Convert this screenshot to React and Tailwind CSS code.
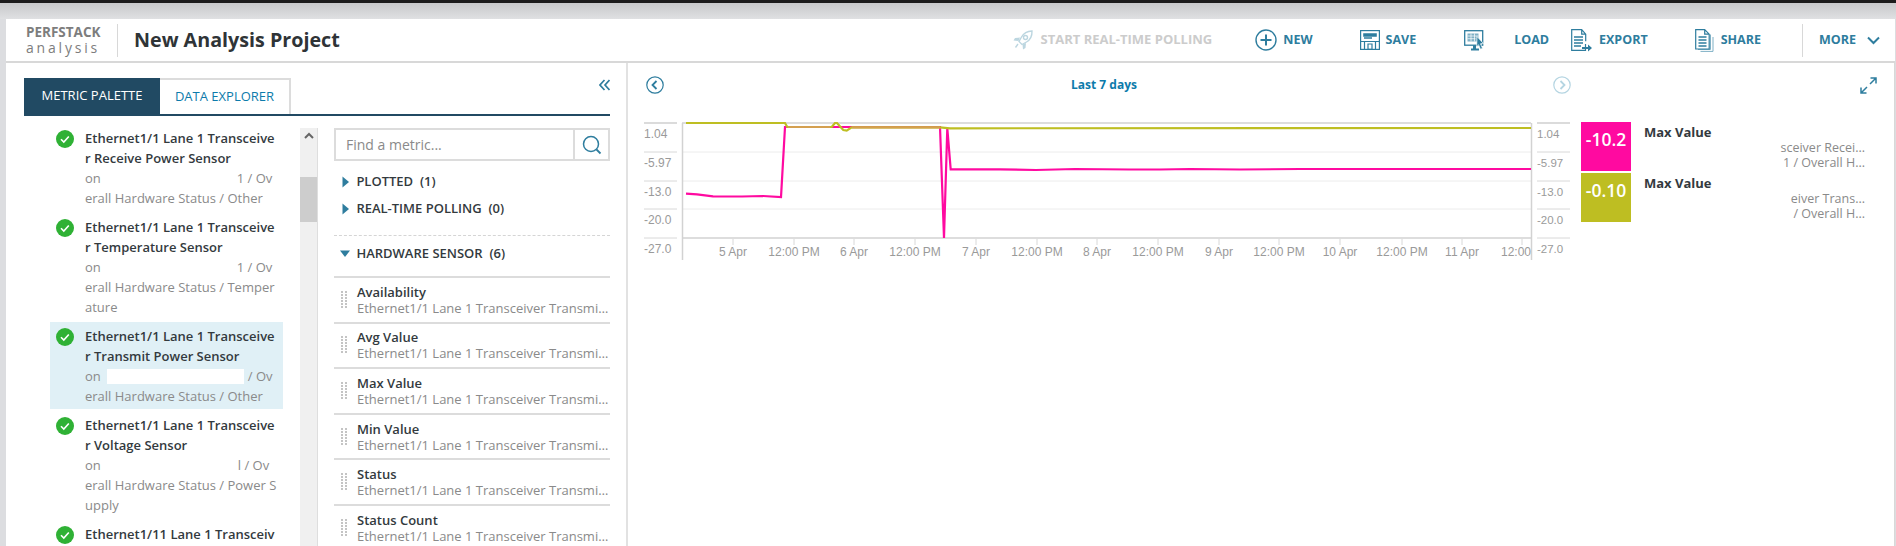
const BLUE = "#2e7d9e";

const Rocket = () => (
  <svg width="22" height="22" viewBox="0 0 22 22" fill="none" stroke="#bcd6e0" strokeWidth="1.4">
    <path d="M20 2c-5 .2-8.5 2.5-10.5 6L7 12.5l3 3 4.5-2.5c3.5-2 5.7-5.5 5.5-11z" />
    <circle cx="13.5" cy="8.5" r="2" />
    <path d="M8 8.5 3 9 1.5 11.5 6.5 12M14 14l-.5 5-2.5 1.5-.5-5" fill="#bcd6e0" stroke="none" />
    <path d="M6 15l-2.5 3.5" />
  </svg>
);
const Plus = () => (
  <svg width="22" height="22" viewBox="0 0 22 22" fill="none" stroke={BLUE}>
    <circle cx="11" cy="11" r="10" strokeWidth="1.4" />
    <path d="M11 5.5v11M5.5 11h11" strokeWidth="2" />
  </svg>
);
const SaveIcon = () => (
  <svg width="20" height="20" viewBox="0 0 20 20" fill="none" stroke={BLUE} strokeWidth="1.2">
    <rect x=".6" y=".6" width="18.8" height="18.8" />
    <path d="M.6 11.5h18.8M4.5 19.4v-7.9M15.5 19.4v-7.9M8 14h4v5.4H8z" />
    <path d="M4 4h12v2H4zM4 8h8" strokeWidth="1.6" fill={BLUE} />
  </svg>
);
const LoadIcon = () => (
  <svg width="21" height="21" viewBox="0 0 21 21" fill="none" stroke={BLUE}>
    <rect x=".7" y=".7" width="18" height="14.5" strokeWidth="1.3" />
    <rect x="3.5" y="3.5" width="11" height="8" fill="#7fb0c5" stroke="none" />
    <path d="M3.5 6h11M3.5 8.7h8M7 3.5v8M10.5 3.5v8" stroke="#fff" strokeWidth=".7" />
    <path d="M7 19.5h8" strokeWidth="2" />
    <path d="M9 15.2h3V19H9z" fill={BLUE} stroke="none" />
    <path d="M13 6.5l6.5 7-3 .3 2 4.500-2 1-2-4.600-1.800 2.300z" fill={BLUE} stroke="#fff" strokeWidth=".7" />
  </svg>
);
const ExportIcon = () => (
  <svg width="21" height="23" viewBox="0 0 21 23" fill="none" stroke={BLUE}>
    <path d="M14.500 15v6.400H.7V.7h10l4 4.500v7M10.700.7v4.500h4" strokeWidth="1.200" />
    <path d="M3 8h9M3 11h9M3 14h9M3 17h7" strokeWidth="1.700" />
    <path d="M11 18h6v-2.500l4 3.500-4 3.500V20h-6z" fill={BLUE} stroke="none" />
  </svg>
);
const ShareIcon = () => (
  <svg width="19" height="23" viewBox="0 0 19 23" fill="none" stroke={BLUE}>
    <path d="M3 20.500h12.500V5.500M5.500 22.400h12.500V8" stroke="#7fb0c5" strokeWidth="1" />
    <path d="M.7 20V.7h9l4.500 4.500V20zM9.700.7v4.500h4.500" strokeWidth="1.200" fill="#fff" />
    <path d="M3.500 8h8M3.500 11h8M3.500 14h8M3.500 17h8" strokeWidth="1.700" />
  </svg>
);
const Chevron = () => (
  <svg width="13" height="9" viewBox="0 0 13 9" fill="none" stroke={BLUE} strokeWidth="2">
    <path d="M1 1.500l5.500 5.500 5.500-5.500" />
  </svg>
);
const DoubleLeft = () => (
  <svg width="11" height="12" viewBox="0 0 11 12" fill="none" stroke={BLUE} strokeWidth="1.700">
    <path d="M5.500 1 1 6l4.500 5M10.500 1 6 6l4.500 5" />
  </svg>
);
const SearchIcon = () => (
  <svg width="20" height="20" viewBox="0 0 20 20" fill="none" stroke={BLUE} strokeWidth="1.500">
    <circle cx="9" cy="9" r="7.500" />
    <path d="M14.500 14.500 18.500 18.500" strokeWidth="1.800" />
  </svg>
);
const Check = () => (
  <svg width="18" height="18" viewBox="0 0 18 18" className="shrink-0">
    <circle cx="9" cy="9" r="9" fill="#2fb135" />
    <path d="M5 9.200l2.800 2.800 5-5.500" fill="none" stroke="#fff" strokeWidth="1.600" />
  </svg>
);
const Caret = ({ down }) => (
  <svg width="10" height="12" viewBox="0 0 10 12" fill={BLUE}>
    {down ? <path d="M0 2.500h10L5 9z" /> : <path d="M1.500 0.500 8 6l-6.500 5.500z" />}
  </svg>
);
const Dots = () => (
  <svg width="6" height="18" viewBox="0 0 6 18" fill="#c4c4c4" className="shrink-0">
    {[0, 3, 6, 9, 12, 15].map((y) => (
      <g key={y}>
        <rect x="0" y={y} width="2" height="2" />
        <rect x="4" y={y} width="2" height="2" />
      </g>
    ))}
  </svg>
);
const Circle = ({ dir, faded }) => (
  <svg width="18" height="18" viewBox="0 0 18 18" fill="none" stroke={faded ? "#b5d5e2" : BLUE}>
    <circle cx="9" cy="9" r="8.200" strokeWidth="1.200" />
    <path d={dir === "l" ? "M10.500 5 6.500 9l4 4" : "M7.500 5l4 4-4 4"} strokeWidth="1.800" />
  </svg>
);
const Expand = () => (
  <svg width="17" height="17" viewBox="0 0 17 17" fill="none" stroke={BLUE} strokeWidth="1.500">
    <path d="M10 7l6-6M10.500 1H16v5.500M7 10l-6 6M1 10.500V16h5.500" />
  </svg>
);

const tools = [
  { icon: <Plus />, label: "NEW", ml: "ml-[43px]", gap: "gap-[6px]" },
  { icon: <SaveIcon />, label: "SAVE", ml: "ml-[47px]", gap: "gap-[6px]" },
  { icon: <LoadIcon />, label: "LOAD", ml: "ml-[48px]", gap: "gap-[29px]" },
  { icon: <ExportIcon />, label: "EXPORT", ml: "ml-[22px]", gap: "gap-[7px]" },
  { icon: <ShareIcon />, label: "SHARE", ml: "ml-[47px]", gap: "gap-[7px]" },
];

const items = [
  { t: ["Ethernet1/1 Lane 1 Transceive", "r Receive Power Sensor"], s: [["on", "w-[126px]", "1 / Ov"], ["erall Hardware Status / Other"]] },
  { t: ["Ethernet1/1 Lane 1 Transceive", "r Temperature Sensor"], s: [["on", "w-[126px]", "1 / Ov"], ["erall Hardware Status / Temper"], ["ature"]] },
  { t: ["Ethernet1/1 Lane 1 Transceive", "r Transmit Power Sensor"], s: [["on", "w-[137px]", "/ Ov", true], ["erall Hardware Status / Other"]], active: true },
  { t: ["Ethernet1/1 Lane 1 Transceive", "r Voltage Sensor"], s: [["on", "w-[127px]", "l / Ov"], ["erall Hardware Status / Power S"], ["upply"]] },
  { t: ["Ethernet1/11 Lane 1 Transceiv"], s: [] },
];

const metrics = ["Availability", "Avg Value", "Max Value", "Min Value", "Status", "Status Count"];

const yTicks = [
  { y: 123, l: "1.04", ty: 138 }, { y: 152, l: "-5.97", ty: 167 },
  { y: 181, l: "-13.0", ty: 196 }, { y: 209, l: "-20.0", ty: 224 }, { y: 238, l: "-27.0", ty: 253 },
];
const xLabels = [
  [733, "5 Apr"], [794, "12:00 PM"], [854, "6 Apr"], [915, "12:00 PM"], [976, "7 Apr"], [1037, "12:00 PM"],
  [1097, "8 Apr"], [1158, "12:00 PM"], [1219, "9 Apr"], [1279, "12:00 PM"], [1340, "10 Apr"], [1402, "12:00 PM"],
  [1462, "11 Apr"], [1522, "12:00"],
];

function Chart() {
  const ox = 640, oy = 118;
  const font = { fontFamily: "'Liberation Sans', sans-serif", fontSize: 12, fill: "#9a9a9a" };
  return (
    <svg width="940" height="150" viewBox={`${ox} ${oy} 940 150`} className="block">
      {[152, 181, 209].map((y) => <path key={y} d={`M682 ${y}H1531`} stroke="#ececec" strokeWidth="1" />)}
      {[123, 238].map((y) => <path key={y} d={`M682 ${y}H1531`} stroke="#d2d2d2" strokeWidth="1.500" />)}
      <path d="M682.500 123V260M1531.500 123V260" stroke="#d2d2d2" strokeWidth="1.500" />
      {yTicks.map((t) => (
        <g key={t.y}>
          <path d={`M644 ${t.y}H677M1537 ${t.y}H1570`} stroke={t.y === 123 ? "#cfcfcf" : "#d8d8d8"} strokeWidth={t.y === 123 ? 1.5 : 1} />
          <text x="644" y={t.ty} {...font}>{t.l}</text>
          <text x="1537" y={t.ty} {...font} fontSize="11.5">{t.l}</text>
        </g>
      ))}
      {xLabels.map(([x, l]) => (
        <g key={x}>
          <path d={`M${x} 239V245`} stroke="#d8d8d8" />
          <text x={l === "12:00" ? 1501 : x} y="256" textAnchor={l === "12:00" ? "start" : "middle"} {...font}>{l}</text>
        </g>
      ))}
      <path
        d="M686 193.700L697 194.300L713 196.300L727 196.500L742 196.500L763 196L781 197L785 127L940 127L944 238L947.300 128.300L950.700 169.300L1000 169.300L1036 170L1075 169L1130 169.500L1160 169.500L1190 169L1240 169.500L1300 169L1531 169"
        fill="none" stroke="#ff0aa0" strokeWidth="2.200"
      />
      <path
        d="M686 123L785 123L787.300 127L831.700 127L835 123L837 123L843.300 130L846.700 130.700L851.700 127.300L940 127.300L950 128.300L1531 128"
        fill="none" stroke="#bebe22" strokeWidth="2.200"
      />
      <path d="M788 127H830M852 127.300H940" stroke="#d4a050" strokeWidth="2.200" />
    </svg>
  );
}

export default function App() {
  return (
    <div className="h-[546px] w-[1896px] overflow-hidden bg-[#dcdde0] flex flex-col font-['Open_Sans',sans-serif]">
      <div className="h-[3px] shrink-0 bg-[#1c1c1c]" />
      <div className="h-[16px] shrink-0 bg-gradient-to-b from-[#c8c9cb] to-[#dfe0e2]" />
      <div className="flex-1 ml-[6px] mr-[1px] bg-white flex flex-col min-h-0">
        {/* Header */}
        <div className="h-[44px] shrink-0 flex items-center border-b-2 border-[#d8d8d8]">
          <div className="ml-[20px] w-[91px] flex flex-col justify-center">
            <div className="text-[13.500px] leading-[15px] font-bold text-[#7d7d7d]">PERFSTACK</div>
            <div className="text-[14px] leading-[15px] tracking-[2.800px] text-[#7d7d7d]">analysis</div>
          </div>
          <div className="w-px h-[33px] bg-[#d8d8d8]" />
          <div className="ml-[16px] text-[19.700px] font-bold text-[#2f3437] whitespace-nowrap">New Analysis Project</div>
          <div className="ml-auto flex items-center">
            <div className="flex items-center gap-[7px]">
              <Rocket />
              <span className="text-[13px] font-bold text-[#cccccc] whitespace-nowrap">START REAL-TIME POLLING</span>
            </div>
            {tools.map((t) => (
              <div key={t.label} className={`flex items-center ${t.ml} ${t.gap}`}>
                {t.icon}
                <span className="text-[12.500px] font-bold text-[#2e7d9e]">{t.label}</span>
              </div>
            ))}
            <div className="ml-[41px] w-px h-[33px] bg-[#d8d8d8]" />
            <div className="ml-[16px] mr-[15px] flex items-center gap-[11px]">
              <span className="text-[12.500px] font-bold text-[#2e7d9e]">MORE</span>
              <Chevron />
            </div>
          </div>
        </div>

        <div className="flex-1 flex min-h-0">
          {/* Left panel */}
          <div className="w-[622px] shrink-0 border-r-2 border-[#e2e2e2] flex flex-col min-h-0 pl-[18px] pr-[16px]">
            <div className="mt-[15px] h-[38px] shrink-0 flex border-b-2 border-[#214a63] relative">
              <div className="w-[136px] bg-[#214a63] text-white text-[13px] flex items-center justify-center">METRIC PALETTE</div>
              <div className="w-[131px] border-t-2 border-r-2 border-[#dcdcdc] text-[#0d7bab] text-[13px] flex items-center justify-center">DATA EXPLORER</div>
              <div className="absolute right-0 top-[1px]"><DoubleLeft /></div>
            </div>
            <div className="flex-1 flex min-h-0">
              {/* list */}
              <div className="w-[294px] shrink-0 pl-[26px] pr-[35px] pt-[8px] flex flex-col gap-[2px] overflow-hidden relative">
                {items.map((it, i) => (
                  <div key={i} className={`flex gap-[11px] pl-[6px] pt-[6px] pb-[3px] ${it.active ? "bg-[#e0f0f6]" : ""}`}>
                    <Check />
                    <div className="whitespace-nowrap min-w-0 -mt-[2px]">
                      {it.t.map((l) => (
                        <div key={l} className="text-[13px] leading-[20px] font-semibold text-[#333a3e]">{l}</div>
                      ))}
                      {it.s.map((l, j) => (
                        <div key={j} className="text-[13px] leading-[20px] text-[#8a8a8a] flex">
                          {l.length > 1 ? (
                            <>
                              <span>{l[0]}</span>
                              <span className={`${l[1]} ml-[6px] mr-[4px] h-[15px] mt-[3px] ${l[3] ? "bg-white" : ""}`} />
                              <span>{l[2]}</span>
                            </>
                          ) : (
                            l[0]
                          )}
                        </div>
                      ))}
                    </div>
                  </div>
                ))}
                <div className="absolute right-0 top-[12px] bottom-0 w-[18px] bg-[#f0f0f0] border-r border-[#dedede] flex flex-col items-center">
                  <svg width="10" height="7" viewBox="0 0 10 7" fill="none" stroke="#666" strokeWidth="2" className="mt-[4px]">
                    <path d="M1 6l4-4 4 4" />
                  </svg>
                  <div className="mt-[38px] h-[45px] w-full bg-[#cdcdcd]" />
                </div>
              </div>
              {/* right of palette */}
              <div className="flex-1 min-w-0 pl-[16px] pt-[12px]">
                <div className="h-[33px] flex border-2 border-[#dcdcdc]">
                  <div className="flex-1 pl-[10px] flex items-center text-[14px] text-[#8a8a8a] border-r-2 border-[#dcdcdc]">Find a metric...</div>
                  <div className="w-[33px] flex items-center justify-center"><SearchIcon /></div>
                </div>
                <div className="mt-[11px] h-[20px] flex items-center gap-[2px] pl-[7px] text-[13px] font-semibold text-[#333a3e] whitespace-pre"><Caret /> PLOTTED  (1)</div>
                <div className="mt-[7px] h-[20px] flex items-center gap-[2px] pl-[7px] text-[13px] font-semibold text-[#333a3e] whitespace-pre"><Caret /> REAL-TIME POLLING  (0)</div>
                <div className="mt-[16px] border-t border-dashed border-[#d5d5d5]" />
                <div className="mt-[8px] h-[20px] flex items-center gap-[3px] pl-[6px] text-[13px] font-semibold text-[#333a3e] whitespace-pre"><Caret down /> HARDWARE SENSOR  (6)</div>
                <div className="mt-[12px] border-t-2 border-[#dcdcdc]">
                  {metrics.map((m) => (
                    <div key={m} className="h-[45.600px] border-b-2 border-[#dcdcdc] flex items-center pl-[7px] gap-[10px]">
                      <Dots />
                      <div className="min-w-0 flex-1">
                        <div className="text-[13px] leading-[16px] font-semibold text-[#333a3e]">{m}</div>
                        <div className="text-[13px] leading-[16px] text-[#8a8a8a] truncate">Ethernet1/1 Lane 1 Transceiver Transmit Power Sensor</div>
                      </div>
                    </div>
                  ))}
                </div>
              </div>
            </div>
          </div>

          {/* Right panel */}
          <div className="flex-1 min-w-0 relative border-r border-[#d8d8d8]">
            <div className="h-[44px] flex items-center">
              <div className="ml-[18px]"><Circle dir="l" /></div>
              <div className="ml-[407px] text-[12px] font-bold text-[#0d7bab] w-[66px] whitespace-nowrap">Last 7 days</div>
              <div className="ml-[416px]"><Circle dir="r" faded /></div>
              <div className="ml-[289px]"><Expand /></div>
            </div>
            <div className="flex">
              <div className="ml-[12px] mt-[11px]"><Chart /></div>
              <div className="ml-[1px] mt-[15px] w-[285px]">
                {[
                  { c: "bg-[#ff0aa0]", v: "-10.2", a: "sceiver Recei...", b: "1 / Overall H..." },
                  { c: "bg-[#bebe22]", v: "-0.10", a: "eiver Trans...", b: "/ Overall H..." },
                ].map((r) => (
                  <div key={r.v} className="flex h-[49px] mb-[2px]">
                    <div className={`${r.c} w-[50px] shrink-0 text-white text-[17.500px] font-semibold text-center pt-[5px] leading-[24px]`}>{r.v}</div>
                    <div className="ml-[13px] w-[221px] relative">
                      <div className="text-[13px] leading-[18px] pt-[1px] font-bold text-[#333a3e]">Max Value</div>
                      <div className="text-[12.500px] leading-[15px] text-[#8a8a8a] text-right -mt-[1px]">{r.a}</div>
                      <div className="text-[12.500px] leading-[15px] text-[#8a8a8a] text-right">{r.b}</div>
                    </div>
                  </div>
                ))}
              </div>
            </div>
          </div>
        </div>
      </div>
    </div>
  );
}
